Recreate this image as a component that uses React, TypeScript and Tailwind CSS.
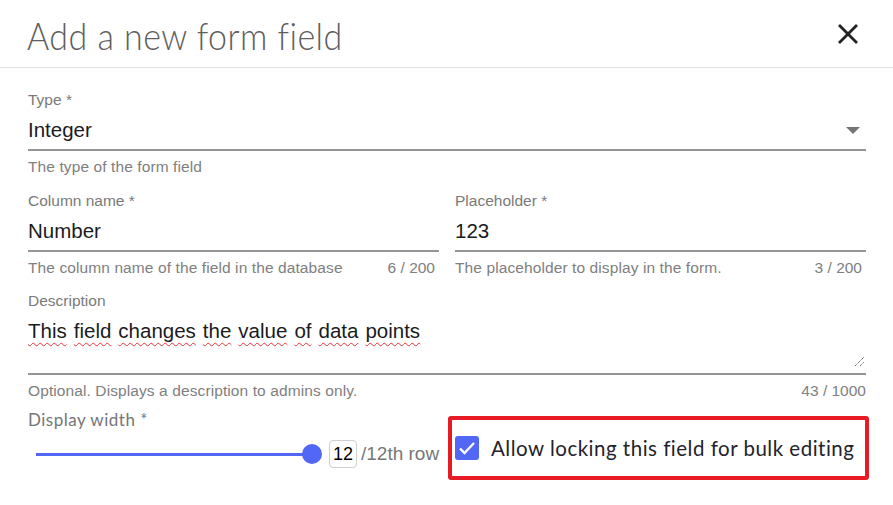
import React from "react";

const blue = "#5367f6";

function Field({
  label,
  value,
  helper,
  counter,
  dropdown,
}: {
  label: string;
  value: string;
  helper: string;
  counter?: string;
  dropdown?: boolean;
}) {
  return (
    <div className="flex flex-col flex-1 min-w-0">
      <div className="text-[15.5px] leading-[16px] text-[#7a7a7a]">{label}</div>
      <div className="mt-[10px] h-[31px] flex items-start justify-between">
        <span className="text-[20.5px] leading-[24px] text-[#1b1b22]">{value}</span>
        {dropdown && (
          <svg className="mt-[9px] mr-[6px]" width="14" height="7" viewBox="0 0 14 7">
            <path d="M0 0h14L7 7z" fill="#757575" />
          </svg>
        )}
      </div>
      <div className="h-[2px] bg-[#959595]" />
      <div className="mt-[8px] flex justify-between text-[15.5px] leading-[16px] text-[#808080]">
        <span className="tracking-[0.1px]">{helper}</span>
        {counter && <span className="pr-[4px]">{counter}</span>}
      </div>
    </div>
  );
}

export default function App() {
  const words = "This field changes the value of data points".split(" ");
  return (
    <div className="w-[893px] h-[505px] bg-white overflow-hidden font-['Liberation_Sans',Arial,sans-serif]">
      {/* Header */}
      <div className="h-[68px] flex items-center justify-between pl-[27px] pr-[34px] pt-[4px] border-b border-[#e2e2e2]">
        <h1 className="font-['Lato',sans-serif] font-light text-[34px] leading-[36px] text-[#5e5e5e] tracking-[0.45px] scale-y-[1.08]">
          Add a new form field
        </h1>
        <svg className="-mt-[4px]" width="22" height="22" viewBox="0 0 22 22">
          <path d="M2 2L20 20M20 2L2 20" stroke="#222" strokeWidth="2.8" />
        </svg>
      </div>

      {/* Body */}
      <div className="pl-[28px] pr-[27px] pt-[24px] flex flex-col">
        <Field label="Type *" value="Integer" helper="The type of the form field" dropdown />

        <div className="mt-[18px] flex gap-[16px]">
          <Field
            label="Column name *"
            value="Number"
            helper="The column name of the field in the database"
            counter="6 / 200"
          />
          <Field
            label="Placeholder *"
            value="123"
            helper="The placeholder to display in the form."
            counter="3 / 200"
          />
        </div>

        {/* Description */}
        <div className="mt-[17px] flex flex-col">
          <div className="text-[15.5px] leading-[16px] text-[#7a7a7a]">Description</div>
          <div className="mt-[10px] h-[54px] flex justify-between">
            <div className="text-[20.5px] leading-[24px] text-[#1b1b22] flex gap-[7px]">
              {words.map((w, i) => (
                <span
                  key={i}
                  className="underline decoration-wavy decoration-[#e8323a] decoration-[1px] underline-offset-[4px]"
                >
                  {w}
                </span>
              ))}
            </div>
            <svg className="self-end mb-[6px] mr-[1px]" width="11" height="11" viewBox="0 0 11 11">
              <path d="M1 10L10 1M6 10L10 6" stroke="#555" strokeWidth="1" strokeDasharray="1.2 0.8" />
            </svg>
          </div>
          <div className="h-[2px] bg-[#959595]" />
          <div className="mt-[8px] flex justify-between text-[15.5px] leading-[16px] text-[#808080]">
            <span className="tracking-[0.1px]">Optional. Displays a description to admins only.</span>
            <span>43 / 1000</span>
          </div>
        </div>

        {/* Bottom row */}
        <div className="mt-[13px] flex items-start">
          <div className="w-[420px] shrink-0 flex flex-col">
            <div className="font-['Lato',sans-serif] text-[17px] leading-[16px] text-[#767676] tracking-[0.5px]">
              Display width *
            </div>
            <div className="mt-[12px] ml-[8px] flex items-center">
              <div className="relative w-[286px] h-[20px] flex items-center">
                <div className="h-[3px] w-[276px]" style={{ backgroundColor: blue }} />
                <div
                  className="absolute right-0 top-0 w-[20px] h-[20px] rounded-full"
                  style={{ backgroundColor: blue }}
                />
              </div>
              <div className="ml-[7px] w-[28px] h-[28px] border border-[#cfcfcf] rounded-[4px] flex items-center justify-center text-[18px] text-black">
                12
              </div>
              <span className="ml-[4px] text-[19px] text-[#777]">/12th row</span>
            </div>
          </div>

          <div className="mt-[4px] w-[421px] shrink-0 h-[64px] border-[4px] border-[#e61b23] rounded-[3px] flex items-center pl-[3px]">
            <div
              className="w-[24px] h-[24px] rounded-[3px] flex items-center justify-center"
              style={{ backgroundColor: blue }}
            >
              <svg width="18" height="14" viewBox="0 0 18 14">
                <path d="M2 7.5L6.5 12L16 2" fill="none" stroke="white" strokeWidth="2.4" />
              </svg>
            </div>
            <span className="ml-[12px] font-['Lato',sans-serif] text-[20.5px] text-[#23232b] tracking-[0.5px]">
              Allow locking this field for bulk editing
            </span>
          </div>
        </div>
      </div>
    </div>
  );
}
